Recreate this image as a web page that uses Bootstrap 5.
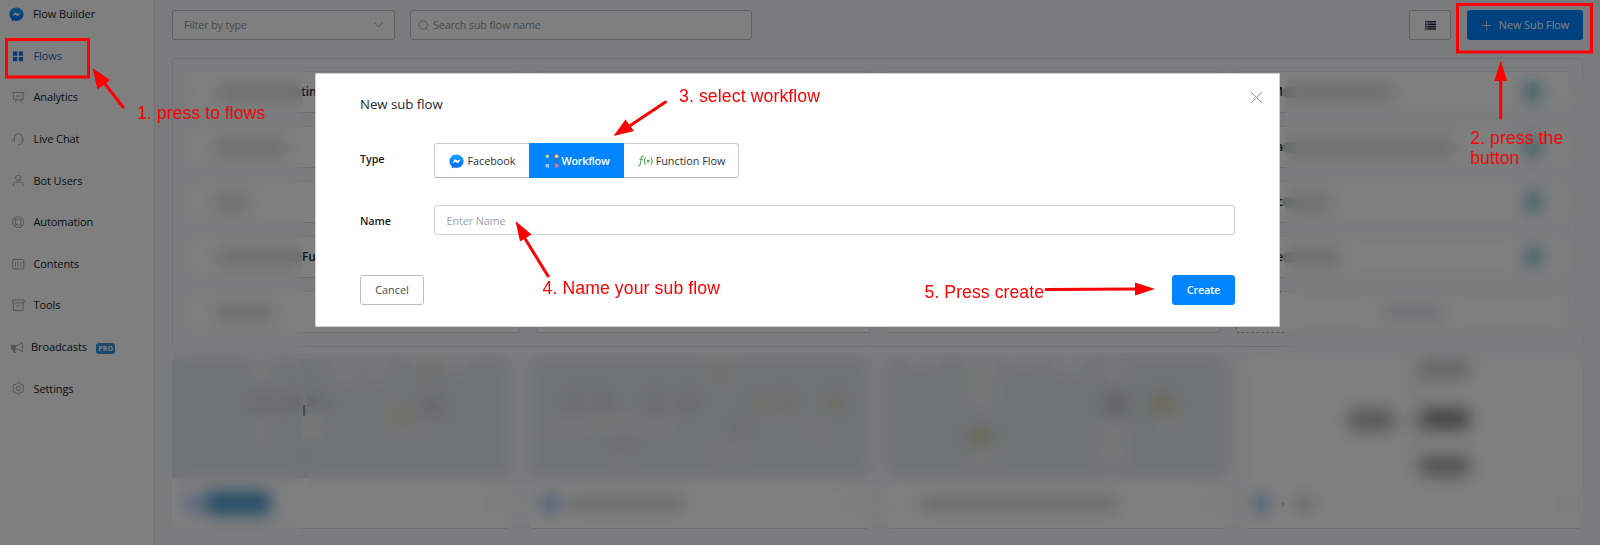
<!DOCTYPE html>
<html lang="en">
<head>
<meta charset="utf-8">
<meta name="viewport" content="width=device-width, initial-scale=1">
<title>Flow Builder – New sub flow</title>
<link href="https://cdn.jsdelivr.net/npm/bootstrap@5.3.0/dist/css/bootstrap.min.css" rel="stylesheet">
<style>
  body { font-family: "Open Sans", "Noto Sans", sans-serif; font-size: 11px; letter-spacing: -.1px; line-height: 16px; color: #101820; background: #f5f7fa; height: 545px; overflow: hidden; }
  svg { display: block; flex: none; }
  .side { width: 155px; background: #fff; border-right: 1px solid #dfe3e8; flex: none; }
  .side-item { height: 41.6px; padding-left: 12px; color: #101828; }
  .side-item svg { width: 12.5px; height: 12.5px; margin-right: 9px; fill: none; stroke: #a2a9b5; stroke-width: 1; }
  .side-top { height: 28px; margin-bottom: 7px; padding-left: 9px; }
  .side-top svg { width: 15px; height: 15px; stroke: none; }
  .side-item.active { color: #1b63d8; }
  .pro-tag { font-size: 7px; line-height: 11px; padding: 0 2.5px; background: #3293dd; color: #fff; border-radius: 3px; margin: 3px 0 0 9px; font-weight: 700; letter-spacing: 0; }
  .work { padding: 10px 17px 0 17px; }
  .box { height: 30px; border: 1px solid #bcc1ca; border-radius: 3px; background: #fff; color: #8d94a0; font-size: 10.7px; }
  .filter-box { width: 223px; padding: 0 11px; margin-right: 15px; }
  .search-box { width: 342px; padding: 0 7px; }
  .list-box { width: 42px; margin-right: 16px; }
  .new-btn { width: 116px; height: 30px; background: #0084ff; color: #fff; border-radius: 3px; padding: 0 0 0 1px; font-size: 10.8px; border: 0; }
  .panel { margin-top: 18px; height: 288.5px; border: 1px solid #dfe3e8; border-radius: 3px; padding: 12px 12px 12px 13px; }
  .panel-grid { display: grid; grid-template-columns: repeat(4, 1fr); column-gap: 16px; row-gap: 13px; grid-auto-rows: 42px; }
  .flow-row { background: #fff; border: 1px solid #e6e9ee; border-bottom-color: #d5dae0; border-radius: 3px; padding-left: 44px; font-size: 12px; font-weight: 600; color: #1c2536; overflow: hidden; }
  .flow-row.last-col { padding-left: 32px; padding-right: 26px; }
  .flow-row.add { border: 1px dashed #a9adb4; }
  .bar { height: 11px; background: #c6cbc6; border-radius: 5px; }
  .bar.b-add { background: #d9dce4; }
  .chip { width: 20px; height: 20px; border-radius: 50%; background: #78bccb; }
  .thumbs { display: grid; grid-template-columns: repeat(4, 1fr); gap: 18px; margin-top: 12.5px; }
  .thumb { background: #fff; height: 170px; border-radius: 4px; overflow: hidden; border-bottom: 1px solid #dde2ec; }
  .thumb .pic { height: 119px; background: #dce6ec; width: 100%; }
  .thumb .pic.plain { background: #fff; }
  .thumb .foot { height: 50px; padding: 0 12px; }
  .dot { width: 17px; height: 17px; border-radius: 50%; background: #7fb0f2; flex: none; }
  /* privacy patches laid over the customer data */
  .patch { position: absolute; backdrop-filter: blur(8px); }
  .patch-l { left: 174px; top: 70px; width: 129px; height: 475px; }
  .patch-m { left: 307px; top: 351px; width: 978px; height: 174px; }
  .patch-r { left: 1285px; top: 73px; width: 298px; height: 452px; }
  .dialog-box { width: 965px; max-width: none; margin: 73px 0 0 315px; }
  .dialog-box .modal-content { height: 254px; border: 1px solid #d4d4d4; border-radius: 1px; padding: 0 44px; }
  .dlg-head { height: 60px; font-size: 13.2px; color: #1c2530; letter-spacing: 0; }
  .x-mark { position: absolute; right: 17.5px; top: 18px; }
  .lbl { width: 74px; font-size: 10.8px; font-weight: 600; color: #1a1a1a; }
  .seg { height: 35px; border: 1px solid #c6cad2; border-bottom-color: #aeb3bd; border-radius: 3px; width: 305px; }
  .seg .btn { border: 0; border-radius: 0; padding: 1px 0 0 1px; font-size: 10.8px; color: #2a2f36; gap: 3px; }
  .seg .btn.active { background: #0084ff; color: #fff; margin: -1px 0; font-weight: 600; letter-spacing: -.25px; }
  .name-box { border-color: #ccd0d7; padding: 1px 11.5px 0; font-size: 10.8px; color: #9aa1ad; }
  .act { height: 30px; padding: 0; border-radius: 3px; font-size: 10.9px; border: 1px solid #b9bdc6; color: #444a52; }
  .act.main { background: #0084ff; border-color: #0084ff; color: #fff; font-weight: 600; letter-spacing: -.25px; }
  .notes { position: absolute; left: 0; top: 0; z-index: 1060; font-family: "Liberation Sans", Arial, sans-serif; font-size: 17.6px; letter-spacing: 0; fill: #f00; }
</style>
</head>
<body>
<svg width="0" height="0" class="position-absolute">
  <defs>
    <linearGradient id="mg" x1="0" y1="0" x2="0" y2="1"><stop offset="0" stop-color="#16a5ff"/><stop offset="1" stop-color="#0068ff"/></linearGradient>
    <symbol id="messenger" viewBox="0 0 16 16"><path d="M8 .5C3.700.5.5 3.600.5 7.700c0 2.200.9 4.100 2.400 5.400l.1 2.100 2.200-.9c.9.300 1.800.4 2.800.4 4.300 0 7.500-3 7.500-7S12.300.5 8 .5z" fill="url(#mg)"/><path d="M3.500 9.800 5.900 6.100l1-.4 2 1.500 3.500-1.700-2.300 3.900-1.100.4-1.900-1.600z" fill="#fff"/></symbol>
  </defs>
</svg>

<div class="d-flex h-100">
  <nav class="side">
    <div class="side-item side-top d-flex align-items-center"><svg><use href="#messenger"/></svg>Flow Builder</div>
    <div class="side-item active d-flex align-items-center"><svg viewBox="0 0 13 13" style="fill:#1473e6;stroke:none"><path d="M1 1.500h4.500V6H1zM7 1.500h4.500V6H7zM1 7.300h4.500v4.500H1zM7 7.300h4.500v4.500H7z"/></svg>Flows</div>
    <div class="side-item d-flex align-items-center"><svg viewBox="0 0 13 13"><path d="M0 1.500h13M1.500 1.500v7.500h10V1.500M4.500 9 3.500 12M8.500 9l1 3M4 6.500l1.500-2 1.500 1.500L9 3.800"/></svg>Analytics</div>
    <div class="side-item d-flex align-items-center"><svg viewBox="0 0 13 13"><path d="M2.500 5.500C2.500 2.500 4 .8 6.500.8s4 1.700 4 4.700M2.500 5.200C.2 5.200.2 9 2.500 9zM10.500 5.200c2.300 0 2.300 3.800 0 3.800zM10.500 9c0 2-1.200 3-3 3H6.500"/></svg>Live Chat</div>
    <div class="side-item d-flex align-items-center"><svg viewBox="0 0 13 13"><circle cx="6.500" cy="4" r="2.800"/><path d="M1.500 12.500V11c0-1.700 1-2.500 2.500-2.500h5c1.500 0 2.500.8 2.500 2.500v1.500"/></svg>Bot Users</div>
    <div class="side-item d-flex align-items-center"><svg viewBox="0 0 13 13"><circle cx="6.500" cy="6.500" r="5.700"/><circle cx="6.500" cy="6.500" r="3.200"/><path d="m2.500 2.500 1.700 1.700m4.600 4.600 1.700 1.700m0-8L8.800 4.200M4.200 8.800l-1.700 1.700"/></svg>Automation</div>
    <div class="side-item d-flex align-items-center"><svg viewBox="0 0 13 13"><rect x=".8" y="1.500" width="11.400" height="9.800" rx="1.200"/><path d="M3.700 4v5M9.300 4v5M6.500 4v1.500m0 1.500v1.500"/></svg>Contents</div>
    <div class="side-item d-flex align-items-center"><svg viewBox="0 0 13 13"><path d="M.5 1h12v3H.5zM1.500 4v8h10V4M4.700 7h3.600"/></svg>Tools</div>
    <div class="side-item d-flex align-items-center" style="padding-left:11px"><svg viewBox="0 0 13 13" style="margin-right:7.500px"><path d="M0 4.500h5v4H0zM2 8.500l1 4h1.500l-.8-4" fill="#a2a9b5"/><path d="M5 4.500c3 0 5-1.500 6.700-3v10C10 10 8 8.500 5 8.500M12.300 5.500v2"/></svg>Broadcasts<span class="pro-tag">PRO</span></div>
    <div class="side-item d-flex align-items-center"><svg viewBox="0 0 13 13"><path d="M4.800 1.800 5.300.6h2.400l.5 1.200 1.300.7 1.300-.2 1.300 2-.8 1.200v2l.8 1.200-1.300 2-1.300-.2-1.300.7-.5 1.200H5.300l-.5-1.200-1.300-.7-1.300.2-1.300-2 .8-1.200v-2L.9 4.300l1.300-2 1.300.2z"/><circle cx="6.500" cy="6.500" r="2.200"/></svg>Settings</div>
  </nav>

  <main class="work flex-grow-1">
    <div class="d-flex align-items-center">
      <div class="box filter-box d-flex align-items-center justify-content-between">Filter by type<svg width="9" height="6" viewBox="0 0 9 6" fill="none" stroke="#a3a9b4"><path d="m.5.5 4 4.500 4-4.500"/></svg></div>
      <div class="box search-box d-flex align-items-center"><svg class="me-1" width="11" height="11" viewBox="0 0 11 11" fill="none" stroke="#a3a9b4"><circle cx="5" cy="5" r="4.200"/><path d="m8 8 2.500 2.500"/></svg>Search sub flow name</div>
      <div class="box list-box d-flex align-items-center justify-content-center ms-auto"><svg width="11" height="9" viewBox="0 0 11 9" fill="#1c2740"><path d="M0 0h1.600v1.600H0zM2.300 0H11v1.600H2.300zM0 2.400h1.600V4H0zM2.300 2.400H11V4H2.300zM0 4.800h1.600v1.600H0zM2.300 4.800H11v1.600H2.300zM0 7.200h1.600v1.600H0zM2.300 7.200H11v1.600H2.300z"/></svg></div>
      <button class="btn new-btn d-flex align-items-center justify-content-center"><svg class="me-2" width="9" height="9" viewBox="0 0 9 9" stroke="#fff" stroke-width=".7"><path d="M4.500 0v9M0 4.500h9"/></svg>New Sub Flow</button>
    </div>

    <section class="panel">
      <div class="panel-grid" id="rows"></div>
    </section>

    <section class="thumbs">
      <article class="thumb">
        <svg class="pic" viewBox="0 0 339 119">
          <g fill="#efefef"><path d="M78 0h22v24H78zM80 62h17v22H80zM128 55h22v25h-22zM160 2h24v22h-24zM195 2h20v22h-20zM215 42h22v32h-22zM240 0h22v8h-22zM275 0h20v14h-20zM240 66h24v8h-24z"/></g>
          <g fill="#d0c8cd"><path d="M80 38h16v10H80zM105 38h22v10h-22zM136 38h18v10h-18zM252 40h16v16h-16z"/></g>
          <path d="M222 50h15v14h-15zM250 8h15v8h-15z" fill="#dbd5ab"/><path d="M131 46h2v11h-2z" fill="#6f9f9a"/><path d="M132 58h2v20h-2z" fill="#eee"/>
        </svg>
        <div class="foot d-flex align-items-center"><span class="dot" style="opacity:.8"></span><span class="ms-1 rounded-2" style="width:66px;height:24px;background:#4a9bce"></span><span class="bar ms-auto" style="width:9px;opacity:.6"></span></div>
      </article>
      <article class="thumb">
        <svg class="pic" viewBox="0 0 339 119">
          <g fill="#ebebeb"><path d="M22 60h34v16H22zM60 56h40v20H60zM100 62h50v10h-50zM175 0h32v10h-32zM182 18h20v9h-20zM178 84h16v16h-16zM204 84h16v13h-16zM230 52h34v10h-34zM278 60h22v20h-22zM82 92h16v12H82z"/></g>
          <g fill="#d0c8cd"><path d="M38 38h16v10H38zM64 38h16v10H64zM118 38h16v10h-16zM150 38h16v10h-16zM84 80h18v8H84zM204 64h16v6h-16z"/></g>
          <path d="M185 8h12v8h-12zM225 38h12v14h-12zM250 36h13v14h-13zM298 36h16v13h-16z" fill="#dad2ac"/>
        </svg>
        <div class="foot d-flex align-items-center"><span class="dot"></span><span class="bar ms-2" style="width:120px"></span><span class="bar ms-auto" style="width:9px;opacity:.6"></span></div>
      </article>
      <article class="thumb">
        <svg class="pic" viewBox="0 0 339 119">
          <g fill="#efefef"><path d="M20 0h32v10H20zM80 2h28v48H80zM82 90h27v16H82zM118 0h36v10h-36zM166 0h30v16h-30zM214 8h26v16h-26zM212 62h26v45h-26zM268 56h22v14h-22z"/></g>
          <path d="M84 70h18v18H84zM266 37h19v19h-19z" fill="#d8cca0"/><path d="M220 36h17v18h-17z" fill="#bfb5b8"/>
        </svg>
        <div class="foot d-flex align-items-center"><span class="bar ms-1" style="width:8px;opacity:.4"></span><span class="bar ms-2" style="width:200px"></span><span class="bar ms-auto" style="width:9px;opacity:.6"></span></div>
      </article>
      <article class="thumb">
        <svg class="pic plain" viewBox="0 0 339 119">
          <path d="M178 13h-8v96h8M145 62h25M170 62h10" stroke="#c5caca" stroke-width="2.500" fill="none"/>
          <g fill="#c8ccc8"><path d="M174 2h52v18h-52z"/><path d="M104 50h45v22h-45z" fill="#b0b1b0"/><path d="M177 49h48v22h-48z" fill="#8e8e8e"/><path d="M177 97h48v20h-48z" fill="#a2a2a2"/></g>
        </svg>
        <div class="foot d-flex align-items-center ps-2"><span class="dot" style="margin-left:1px"></span><span style="width:2px;height:5px;background:#e08a1e;margin:3px 0 0 12.500px"></span><span class="bar" style="width:22px;margin-left:10px"></span><span class="bar ms-auto" style="width:9px;opacity:.6"></span></div>
      </article>
    </section>
  </main>
</div>
<div class="patch patch-l"></div><div class="patch patch-m"></div><div class="patch patch-r"></div>

<div class="modal-backdrop show"></div>
<div class="modal d-block show overflow-hidden" tabindex="-1">
  <div class="modal-dialog dialog-box">
    <div class="modal-content">
      <svg class="x-mark" width="11" height="11" viewBox="0 0 11 11" stroke="#888c93"><path d="m.3.3 10.400 10.400M10.700.3.3 10.700"/></svg>
      <div class="dlg-head d-flex align-items-center">New sub flow</div>
      <div class="d-flex" style="margin-top:9px">
        <div class="lbl" style="padding-top:8px">Type</div>
        <div class="seg d-flex">
          <button class="btn d-flex align-items-center justify-content-center" style="width:94px"><svg width="15" height="15"><use href="#messenger"/></svg>Facebook</button>
          <button class="btn active d-flex align-items-center justify-content-center" style="width:95px"><svg width="14" height="14" viewBox="0 0 14 14"><path d="M2.500 2h9M2.500 4v6M11.500 4v6" stroke="#536b96" stroke-dasharray="2 1.500"/><circle cx="2.300" cy="2.200" r="1.700" fill="#b9dc8f"/><circle cx="11.700" cy="2.200" r="1.900" fill="#ffc36b"/><path d="M.5 10h3.500v3.500H.5z" fill="#9fc4f2"/><circle cx="11.700" cy="11.700" r="1.900" fill="#ff6f6f"/></svg>Workflow</button>
          <button class="btn d-flex align-items-center justify-content-center" style="width:114px"><svg width="15" height="12" viewBox="0 0 15 12" fill="none" stroke="#47a447" stroke-width="1.100"><path d="M5.600 1.400C4 .6 3.500 1.600 3.200 3.500L2.300 9c-.3 1.500-.9 1.800-2 1.400M1.300 4.300h3.600M7.500 2.500c-1.400 2-1.400 5 0 7M13 2.500c1.400 2 1.400 5 0 7M9 4.800l2.500 2.700m0-2.700L9 7.500"/></svg>Function Flow</button>
        </div>
      </div>
      <div class="d-flex align-items-center" style="margin-top:27px">
        <div class="lbl pt-1" style="margin-top:-2px">Name</div><div class="box name-box flex-grow-1 d-flex align-items-center">Enter Name</div>
      </div>
      <div class="d-flex justify-content-between" style="margin-top:40px">
        <button class="btn act" style="width:64px">Cancel</button><button class="btn act main" style="width:63px">Create</button>
      </div>
    </div>
  </div>
</div>

<svg class="notes" width="1600" height="545" viewBox="0 0 1600 545">
  <g fill="none" stroke="#f00" stroke-width="3"><rect x="6.500" y="39.500" width="82" height="37.500"/><rect x="1457.500" y="4.500" width="134" height="47.500"/>
    <path d="M123 107 102 80M1500.700 118V76M665.500 102 628 127M548 276 524 237M1046 289.500l90-.5" stroke-linecap="round"/></g>
  <path d="M92.500 68l17.500 12-12.500 9.500zM1500.700 61l6.500 20h-13zM613.500 136l12-16.500 8.500 11.500zM515.500 221l16 13.500-11.500 7zM1155 289l-20 6.500v-13z"/>
  <text x="137" y="119" textLength="128">1. press to flows</text>
  <text x="1470" y="143.500" textLength="93">2. press the</text><text x="1470" y="164" textLength="49">button</text>
  <text x="679" y="101.500" textLength="141">3. select workflow</text>
  <text x="542.500" y="294" textLength="177.500">4. Name your sub flow</text>
  <text x="924.500" y="298" textLength="119.500">5. Press create</text>
</svg>

<script>
  // first column: [bar width, text past the bar]; last column: [text before the bar, bar width]
  const first = [[85, 'tin'], [74, ''], [36, ''], [86, 'Fu'], [62, '']];
  const last = [['M', 112], ['a', 172], ['c', 48], ['e', 58], ['', 62]];
  const rows = document.getElementById('rows');
  for (let i = 0; i < 5; i++) {
    rows.insertAdjacentHTML('beforeend',
      `<div class="flow-row d-flex align-items-center" style="padding-left:${i === 0 || i === 3 ? 29 : 26}px"><span class="bar" style="width:${first[i][0]}px"></span>${first[i][1]}</div>
       <div class="flow-row"></div><div class="flow-row"></div>
       <div class="flow-row last-col d-flex align-items-center ${i === 4 ? 'add justify-content-center' : ''}"><span class="text-end" style="width:14px">${last[i][0]}</span><span class="bar ${i === 4 ? 'b-add' : ''}" style="width:${last[i][1]}px"></span>${i < 4 ? '<span class="chip ms-auto"></span>' : ''}</div>`);
  }
</script>
<script src="https://cdn.jsdelivr.net/npm/bootstrap@5.3.0/dist/js/bootstrap.bundle.min.js"></script>
</body>
</html>
